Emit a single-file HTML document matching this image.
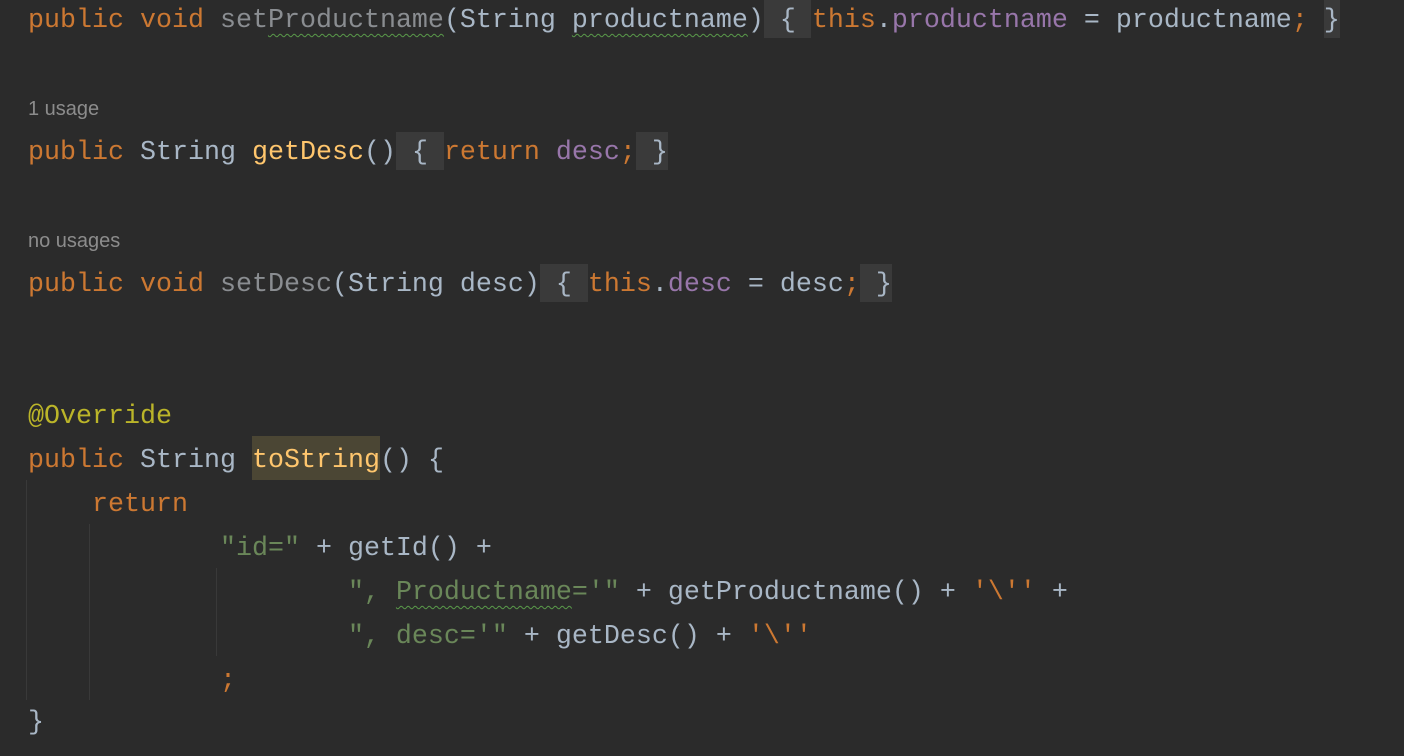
<!DOCTYPE html>
<html><head><meta charset="utf-8"><style>
html,body{margin:0;padding:0;background:#2b2b2b;width:1404px;height:756px;overflow:hidden}
.l{position:absolute;left:28px;height:44px;line-height:44px;font-family:"Liberation Mono",monospace;font-size:26.67px;color:#a9b7c6;white-space:pre}
.u{position:absolute;left:28px;font-family:"Liberation Sans",sans-serif;font-size:20px;color:#8c8c8c;line-height:24px}
.k{color:#cc7832}.m{color:#ffc66d}.f{color:#9876aa}.s{color:#6a8759}.a{color:#bbb529}.g{color:#8a8d91}
.w{text-decoration:underline wavy #5a9a4a;text-decoration-thickness:1px;text-underline-offset:6px}
.box{position:absolute;background:#3a3a3a;height:38px}
.vg{position:absolute;width:1px;background:#393939}
</style></head><body>
<div class="box" style="left:764px;top:0px;width:47px"></div>
<div class="box" style="left:1324px;top:0px;width:16px"></div>
<div class="box" style="left:396px;top:132px;width:48px"></div>
<div class="box" style="left:636px;top:132px;width:32px"></div>
<div class="box" style="left:540px;top:264px;width:48px"></div>
<div class="box" style="left:860px;top:264px;width:32px"></div>
<div style="position:absolute;left:252px;top:436px;width:128px;height:44px;background:#4b4634"></div>
<div class="vg" style="left:26px;top:480px;height:220px"></div>
<div class="vg" style="left:89px;top:524px;height:176px"></div>
<div class="vg" style="left:216px;top:568px;height:88px"></div>

<div class="l" style="top:-1px"><span class="k">public void </span><span class="g">set<span class="w">Productname</span></span>(String <span class="w">productname</span>) { <span class="k">this</span>.<span class="f">productname</span> = productname<span class="k">;</span> }</div>
<div class="u" style="top:97px">1 usage</div>
<div class="l" style="top:131px"><span class="k">public </span>String <span class="m">getDesc</span>() { <span class="k">return </span><span class="f">desc</span><span class="k">;</span> }</div>
<div class="u" style="top:229px">no usages</div>
<div class="l" style="top:263px"><span class="k">public void </span><span class="g">setDesc</span>(String desc) { <span class="k">this</span>.<span class="f">desc</span> = desc<span class="k">;</span> }</div>
<div class="l" style="top:395px"><span class="a">@Override</span></div>
<div class="l" style="top:439px"><span class="k">public </span>String <span class="m">toString</span>() {</div>
<div class="l" style="top:483px">    <span class="k">return</span></div>
<div class="l" style="top:527px">            <span class="s">"id="</span> + getId() +</div>
<div class="l" style="top:571px">                    <span class="s">", <span class="w">Productname</span>='"</span> + getProductname() + <span class="k">'\''</span> +</div>
<div class="l" style="top:615px">                    <span class="s">", desc='"</span> + getDesc() + <span class="k">'\''</span></div>
<div class="l" style="top:659px">            <span class="k">;</span></div>
<div class="l" style="top:701px">}</div>
</body></html>
